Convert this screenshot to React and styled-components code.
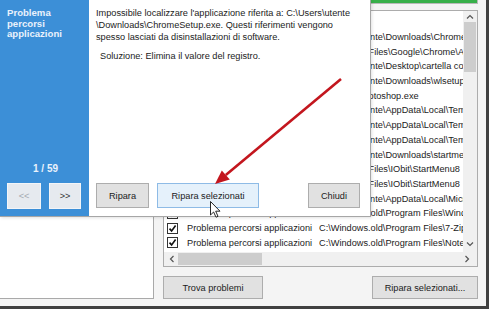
import React from "react";
import styled, { createGlobalStyle } from "styled-components";

const GlobalStyle = createGlobalStyle`
  html, body {
    margin: 0;
    padding: 0;
  }
  body {
    font-family: "Liberation Sans", Arial, sans-serif;
    font-size: 9.2px;
    color: #1b1b1b;
  }
`;

//background window
const Screen = styled.div`
  position: relative;
  width: 489px;
  height: 309px;
  box-sizing: border-box;
  overflow: hidden;
  background: #f4f4f4;
  border-right: 3px solid #404040;
  border-bottom: 3px solid #404040;
  padding: 0 8px 7px 0;
  display: grid;
  grid-template-columns: 154px 1fr;
  column-gap: 9px;
`;

const SidePanel = styled.div`
  background: #fff;
  border-right: 1px solid #a9a9a9;
  border-bottom: 1px solid #a9a9a9;
`;

const MainColumn = styled.div`
  display: flex;
  flex-direction: column;
`;

const Progress = styled.div`
  height: 3px;
  background: #38b04a;
  border: 1px solid #b9b9b9;
  border-top: none;
`;

const ListBox = styled.div`
  margin-top: 6px;
  height: 257px;
  box-sizing: border-box;
  border: 1px solid #acacac;
  background: #fff;
  display: grid;
  grid-template-columns: 1fr 14px;
  grid-template-rows: 1fr 14px;
  overflow: hidden;
`;

const Rows = styled.div`
  overflow: hidden;
  padding-top: 19px;
`;

const Row = styled.div`
  height: 14.7px;
  display: grid;
  grid-template-columns: 23px 132px 1fr;
  align-items: center;
  white-space: nowrap;
  line-height: 14.7px;
`;

const Cell = styled.span`
  overflow: hidden;
`;

const Check = styled.span`
  margin-left: 3px;
  width: 9px;
  height: 9px;
  border: 1px solid #333;
  background: #fff;
  display: flex;
  align-items: center;
  justify-content: center;
`;

const VScroll = styled.div`
  background: #f0f0f0;
  display: flex;
  flex-direction: column;
  align-items: center;
`;

const Thumb = styled.div`
  width: ${p => (p.horizontal ? "84px" : "12px")};
  height: ${p => (p.horizontal ? "12px" : "50px")};
  background: #cdcdcd;
`;

const HScroll = styled.div`
  grid-column: 1 / -1;
  background: #f0f0f0;
  display: flex;
  align-items: center;
  padding: 0 4px 0 2px;
`;

const Chevron = styled.span`
  width: 12px;
  height: ${p => p.h || "12px"};
  display: flex;
  align-items: center;
  justify-content: center;
`;

const BottomBar = styled.div`
  margin-top: 9px;
  display: flex;
  justify-content: space-between;
`;

const Button = styled.button`
  height: ${p => p.h || "23px"};
  width: ${p => p.w};
  padding: 0;
  box-sizing: border-box;
  font-family: "Liberation Sans", Arial, sans-serif;
  font-size: 9.2px;
  color: #1b1b1b;
  background: ${p => (p.hover ? "#e5f1fb" : "#e1e1e1")};
  border: 1px solid ${p => (p.hover ? "#8ebbe6" : "#adadad")};
`;

//dialog overlay
const Dialog = styled.div`
  position: absolute;
  top: 0;
  left: 0;
  width: 371px;
  height: 217px;
  box-sizing: border-box;
  background: #fff;
  border-right: 1px solid #a6a6a6;
  border-bottom: 1px solid #a6a6a6;
  box-shadow: 1px 1px 3px rgba(0, 0, 0, 0.12);
  display: grid;
  grid-template-columns: 89px 1fr;
`;

const Sidebar = styled.div`
  background: #3c8fd7;
  color: #eaf2fc;
  padding: 8px 7px 7px 7px;
  display: flex;
  flex-direction: column;
`;

const SideTitle = styled.div`
  font-weight: bold;
  font-size: 9.6px;
  line-height: 10.5px;
`;

const Counter = styled.div`
  margin-top: auto;
  text-align: center;
  font-weight: bold;
  font-size: 10px;
  line-height: 12px;
  padding-left: 2px;
`;

const Nav = styled.div`
  margin-top: 8px;
  display: flex;
  gap: 8px;
`;

const NavButton = styled.div`
  width: ${p => p.w};
  height: 26px;
  box-sizing: border-box;
  background: #e6eaef;
  border: 1px solid #f3f5f8;
  color: ${p => (p.disabled ? "#a3a9b0" : "#333")};
  font-size: 9.2px;
  display: flex;
  align-items: center;
  justify-content: center;
`;

const Body = styled.div`
  padding: 7px 10px 8px 7px;
  display: flex;
  flex-direction: column;
`;

const Message = styled.div`
  line-height: 12px;
  white-space: nowrap;
`;

const Solution = styled.div`
  margin-top: 7px;
  padding-left: 4px;
  line-height: 12px;
`;

const Actions = styled.div`
  margin-top: auto;
  display: flex;
  gap: 8px;
`;

const Overlay = styled.svg`
  position: absolute;
  top: 0;
  left: 0;
  pointer-events: none;
`;

const rows = [
  "C:\\Users\\utente\\Downloads\\ChromeSetup.exe",
  "C:\\Program Files\\Google\\Chrome\\Application",
  "C:\\Users\\utente\\Desktop\\cartella compressa",
  "C:\\Users\\utente\\Downloads\\wlsetup-all.exe",
  "C:\\Users\\Photoshop.exe",
  "C:\\Users\\utente\\AppData\\Local\\Temp",
  "C:\\Users\\utente\\AppData\\Local\\Temp",
  "C:\\Users\\utente\\AppData\\Local\\Temp",
  "C:\\Users\\utente\\Downloads\\startmenu8.exe",
  "C:\\Program Files\\IObit\\StartMenu8",
  "C:\\Program Files\\IObit\\StartMenu8",
  "C:\\Users\\utente\\AppData\\Local\\Microsoft",
  "C:\\Windows.old\\Program Files\\Windows Live",
  "C:\\Windows.old\\Program Files\\7-Zip",
  "C:\\Windows.old\\Program Files\\Notepad++"
];

const Tick = () => (
  <svg width="9" height="9" viewBox="0 0 9 9">
    <path d="M1.5 4.6 L3.6 6.9 L7.6 1.6" fill="none" stroke="#111" strokeWidth="1.6" />
  </svg>
);

const Arrow = ({ d }) => (
  <svg width="8" height="6" viewBox="0 0 8 6">
    <path d={d} fill="none" stroke="#555" strokeWidth="1.2" />
  </svg>
);

function App() {
  return (
    <>
      <GlobalStyle />
      <Screen>
        <SidePanel />
        <MainColumn>
          <Progress />
          <ListBox>
            <Rows>
              {rows.map((path, i) => (
                <Row key={i}>
                  <Check>
                    <Tick />
                  </Check>
                  <Cell>Problema percorsi applicazioni</Cell>
                  <Cell>{path}</Cell>
                </Row>
              ))}
            </Rows>
            <VScroll>
              <Chevron h="11px">
                <Arrow d="M1 4.5 L4 1.5 L7 4.5" />
              </Chevron>
              <Thumb />
              <Chevron h="14px" style={{ marginTop: "auto", marginBottom: "1px" }}>
                <Arrow d="M1 1.5 L4 4.5 L7 1.5" />
              </Chevron>
            </VScroll>
            <HScroll>
              <Chevron>
                <svg width="6" height="8" viewBox="0 0 6 8">
                  <path d="M4.5 1 L1.5 4 L4.5 7" fill="none" stroke="#555" strokeWidth="1.2" />
                </svg>
              </Chevron>
              <Thumb horizontal />
              <Chevron style={{ marginLeft: "auto" }}>
                <svg width="6" height="8" viewBox="0 0 6 8">
                  <path d="M1.5 1 L4.5 4 L1.5 7" fill="none" stroke="#555" strokeWidth="1.2" />
                </svg>
              </Chevron>
            </HScroll>
          </ListBox>
          <BottomBar>
            <Button w="100px">Trova problemi</Button>
            <Button w="106px">Ripara selezionati...</Button>
          </BottomBar>
        </MainColumn>

        <Dialog>
          <Sidebar>
            <SideTitle>
              Problema
              <br />
              percorsi
              <br />
              applicazioni
            </SideTitle>
            <Counter>1 / 59</Counter>
            <Nav>
              <NavButton w="34px" disabled>
                &lt;&lt;
              </NavButton>
              <NavButton w="32px">&gt;&gt;</NavButton>
            </Nav>
          </Sidebar>
          <Body>
            <Message>
              Impossibile localizzare l'applicazione riferita a: C:\Users\utente
              <br />
              \Downloads\ChromeSetup.exe. Questi riferimenti vengono
              <br />
              spesso lasciati da disinstallazioni di software.
            </Message>
            <Solution>Soluzione: Elimina il valore del registro.</Solution>
            <Actions>
              <Button h="25px" w="53px">
                Ripara
              </Button>
              <Button h="25px" w="102px" hover>
                Ripara selezionati
              </Button>
              <Button h="25px" w="52px" style={{ marginLeft: "auto" }}>
                Chiudi
              </Button>
            </Actions>
          </Body>
        </Dialog>

        <Overlay width="489" height="309" viewBox="0 0 489 309">
          <line x1="341" y1="79" x2="225.8" y2="175" stroke="#c3161e" strokeWidth="2.6" />
          <polygon points="215,184 229.8,179.6 221.8,170.4" fill="#c3161e" />
          <path
            d="M210.5 201.5 L210.5 215 L213.6 212 L216 217.2 L218 216.3 L215.7 211.2 L220 211.2 Z"
            fill="#fff"
            stroke="#111"
            strokeWidth="0.9"
            strokeLinejoin="round"
          />
        </Overlay>
      </Screen>
    </>
  );
}

export default App;
